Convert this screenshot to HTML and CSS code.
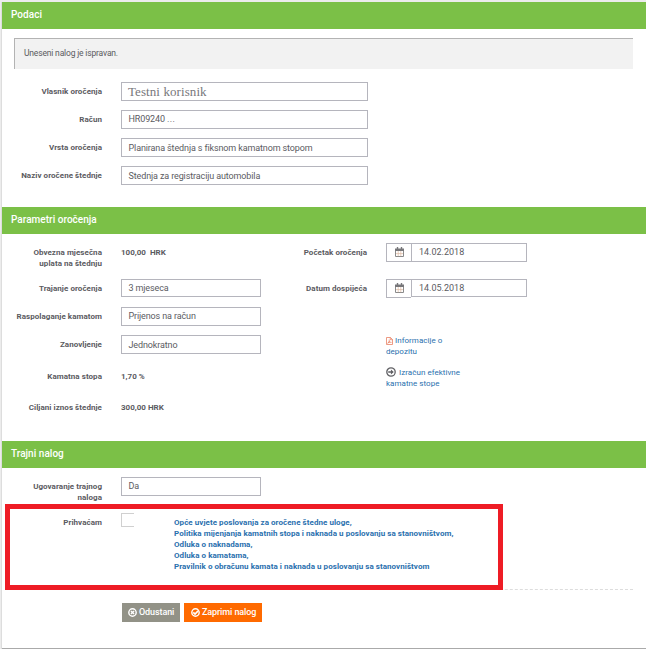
FILE: index.html
```html
<!DOCTYPE html>
<html lang="hr">
<head>
<meta charset="utf-8">
<title>Nalog za oročenje</title>
<link rel="stylesheet" href="styles.css">
</head>
<body>
<main class="card">
  <section class="section section-data">
    <h2 class="section-title">Podaci</h2>
    <p class="notice">Uneseni nalog je ispravan.</p>
    <div class="row"><span class="label">Vlasnik oročenja</span><div class="field wide owner">Testni korisnik</div></div>
    <div class="row"><span class="label">Račun</span><div class="field wide">HR09240 <span class="dots">...</span></div></div>
    <div class="row"><span class="label">Vrsta oročenja</span><div class="field wide lower">Planirana štednja s fiksnom kamatnom stopom</div></div>
    <div class="row"><span class="label">Naziv oročene štednje</span><div class="field wide lower">Stednja za registraciju automobila</div></div>
  </section>

  <section class="section section-params">
    <h2 class="section-title">Parametri oročenja</h2>
    <div class="columns">
      <div class="col-left">
        <div class="row tall"><span class="label">Obvezna mjesečna<br>uplata na štednju</span><strong class="value">100,00 &nbsp;HRK</strong></div>
        <div class="row"><span class="label">Trajanje oročenja</span><div class="field short">3 mjeseca</div></div>
        <div class="row"><span class="label">Raspolaganje kamatom</span><div class="field">Prijenos na račun</div></div>
        <div class="row"><span class="label">Zanovljenje</span><div class="field lower">Jednokratno</div></div>
        <div class="row rate"><span class="label">Kamatna stopa</span><strong class="value">1,70 %</strong></div>
        <div class="row target"><span class="label">Ciljani iznos štednje</span><strong class="value">300,00 HRK</strong></div>
      </div>
      <div class="col-right">
        <div class="row tall"><span class="label">Početak oročenja</span>
          <div class="date"><div class="date-icon"><svg class="calendar" viewBox="0 0 9 10"><path d="M.5 2.5h8v7h-8z" fill="#fff" stroke="#8a8a8a"/><path d="M0 1.5h9V4H0z" fill="#77777a"/><path d="M2.5 0v3M6.5 0v3" stroke="#77777a" stroke-width="1.4"/><path d="M3.2 4v5.2M5.8 4v5.2M1 6.6h7" stroke="#dcb9a0" stroke-width=".7"/></svg></div><div class="field">14.02.2018</div></div>
        </div>
        <div class="row"><span class="label">Datum dospijeća</span>
          <div class="date"><div class="date-icon"><svg class="calendar" viewBox="0 0 9 10"><path d="M.5 2.5h8v7h-8z" fill="#fff" stroke="#8a8a8a"/><path d="M0 1.5h9V4H0z" fill="#77777a"/><path d="M2.5 0v3M6.5 0v3" stroke="#77777a" stroke-width="1.4"/><path d="M3.2 4v5.2M5.8 4v5.2M1 6.6h7" stroke="#dcb9a0" stroke-width=".7"/></svg></div><div class="field short">14.05.2018</div></div>
        </div>
        <div class="links">
          <a class="link pdf-link"><svg class="pdf" viewBox="0 0 7 8"><path d="M.5.5h4l2 2v5h-6zM4.3.5v2.2h2.2M1.5 6.4C3 5.7 3.5 3.5 3.2 2.6M3.1 4.1c.4 1 1.2 1.4 2.4 1.3M1.8 5.8l2.4-.7" fill="none" stroke="#e98265" stroke-width=".8"/></svg> Informacije o<br>depozitu</a>
          <a class="link calc-link"><svg class="arrow" viewBox="0 0 10 10"><circle cx="5" cy="5" r="4.2" fill="none" stroke="#606064" stroke-width="1.3"/><path d="M2.2 4.2h2.7V2.4L7.8 5 4.9 7.6V5.8H2.2z" fill="#606064"/></svg> Izračun efektivne<br>kamatne stope</a>
        </div>
      </div>
    </div>
  </section>

  <section class="section section-order">
    <h2 class="section-title">Trajni nalog</h2>
    <div class="row order"><span class="label">Ugovaranje trajnog<br>naloga</span><div class="field">Da</div></div>
    <div class="consent">
      <span class="label">Prihvaćam</span>
      <div class="checkbox"></div>
      <div class="terms">
        <a>Opće uvjete poslovanja za oročene štedne uloge,</a>
        <a>Politika mijenjanja kamatnih stopa i naknada u poslovanju sa stanovništvom,</a>
        <a>Odluka o naknadama,</a>
        <a>Odluka o kamatama,</a>
        <a>Pravilnik o obračunu kamata i naknada u poslovanju sa stanovništvom</a>
      </div>
      <div class="highlight"></div>
    </div>
    <div class="actions">
      <button class="btn cancel"><svg viewBox="0 0 10 10"><circle cx="5" cy="5" r="4.1" fill="none" stroke="#fff" stroke-width="1.6"/><path d="M3.3 3.3l3.4 3.4M6.7 3.3L3.3 6.7" stroke="#fff" stroke-width="1.6"/></svg><span>Odustani</span></button>
      <button class="btn submit"><svg viewBox="0 0 10 10"><circle cx="5" cy="5" r="4.1" fill="none" stroke="#fff" stroke-width="1.6"/><path d="M2.5 4.8l2 2 3.4-3.6" fill="none" stroke="#fff" stroke-width="1.8"/></svg><span>Zaprimi nalog</span></button>
    </div>
  </section>
</main>
</body>
</html>
```
FILE: styles.css
```css
* { box-sizing: border-box; }
body {
  margin: 0;
  padding: 2px 0 0 2px;
  height: 649px;
  overflow: hidden;
  background: #ececec;
  font-family: Roboto, "Liberation Sans", sans-serif;
  font-size: 9px;
  color: #5b5b5f;
}
.card {
  height: 647px;
  background: #fff;
  border-bottom: 1px solid #aaa;
  box-shadow: -1px 0 0 #ddd;
}
.section { padding: 0 13px 0 12px; }
.section-data { height: 205px; }
.section-params { height: 234px; }
.section-title {
  margin: 0 -13px 0 -12px;
  padding: 0 9px;
  height: 27px;
  line-height: 26px;
  background: #7bc047;
  color: #fff;
  font-size: 10px;
  font-weight: 500;
  letter-spacing: .03px;
}
.notice {
  margin: 9px 0 13px;
  height: 31px;
  padding-left: 9px;
  line-height: 29px;
  background: #f2f2f2;
  border-top: 1px solid #b3b3b3;
  border-left: 1px solid #b3b3b3;
  font-size: 8.5px;
  letter-spacing: -.17px;
}
.row {
  display: grid;
  grid-template-columns: 88px 1fr;
  column-gap: 19px;
  height: 28px;
}
.label {
  padding-top: 4px;
  text-align: right;
  white-space: nowrap;
  font-size: 8px;
  font-weight: 700;
  line-height: 11px;
  letter-spacing: .05px;
}
.field {
  width: 140px;
  height: 19px;
  padding-left: 6.5px;
  border: 1px solid #b5b5bd;
  line-height: 16px;
  font-size: 9px;
  letter-spacing: -.12px;
  white-space: nowrap;
}
.wide { width: 247px; }
.short { height: 18px; }
.lower { line-height: 18px; }
.dots { letter-spacing: .3px; }
.owner {
  padding-left: 6px;
  font-family: "Liberation Serif", serif;
  font-size: 13px;
  line-height: 18px;
  letter-spacing: .08px;
  color: #77777b;
}
.columns { display: grid; grid-template-columns: 265px 1fr; padding-top: 9px; }
.tall { height: 36px; }
.value { padding-top: 4px; font-size: 8px; line-height: 11px; }
.rate { height: 31px; }
.rate .label, .rate .value { padding-top: 8px; }
.target .label, .target .value { padding-top: 8px; }
.date { display: flex; }
.date-icon {
  width: 25px;
  height: 19px;
  border: 1px solid #b5b5bd;
  border-right: 0;
}
.calendar { display: block; width: 9px; height: 10px; margin: 3px auto 0; }
.date .field { width: 116px; padding-left: 7px; letter-spacing: 0; }
.links { padding: 28px 0 0 107px; }
.link {
  display: block;
  font-size: 8px;
  line-height: 11px;
  letter-spacing: .04px;
  color: #2a70ae;
  white-space: nowrap;
}
.link svg { vertical-align: -2px; }
.pdf { width: 7px; height: 8px; }
.arrow { width: 10px; height: 10px; margin-right: 1px; }
.calc-link { margin-top: 10px; }
.order { padding-top: 9px; height: 45px; }
.consent {
  position: relative;
  display: grid;
  grid-template-columns: 88px 13px 1fr;
  column-gap: 19px;
  height: 77px;
  border-bottom: 1px dashed #ddd;
}
.checkbox { width: 13px; height: 14px; border: 1px solid #d0d0d0; border-right: 0; }
.terms { padding: 4px 0 0 21px; }
.terms a {
  display: block;
  width: max-content;
  font-size: 8px;
  font-weight: 700;
  line-height: 11px;
  letter-spacing: .055px;
  color: #2a70ae;
}
.highlight {
  position: absolute;
  left: -9px;
  top: -9px;
  width: 498px;
  height: 86px;
  border: 5px solid #ee1c25;
}
.actions { display: flex; gap: 4px; padding: 13px 0 0 108px; }
.btn {
  display: flex;
  align-items: center;
  gap: 2px;
  height: 19px;
  padding: 0 0 0 6px;
  border: 0;
  color: #fff;
  font: 500 9px/19px Roboto, sans-serif;
  letter-spacing: -.1px;
  white-space: nowrap;
}
.btn svg { width: 9px; height: 9px; flex: none; }
.cancel { width: 58px; background: #929287; }
.submit { width: 78px; padding-left: 7px; background: #ff6a00; }
```
